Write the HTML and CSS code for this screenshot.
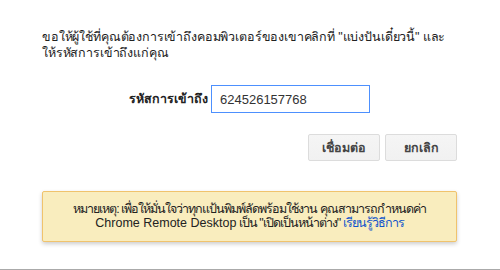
FILE: index.html
```html
<!DOCTYPE html>
<html lang="th">
<head>
<meta charset="utf-8">
<link rel="stylesheet" href="styles.css">
</head>
<body>
<div class="dialog">
  <p class="intro">ขอให้ผู้ใช้ที่คุณต้องการเข้าถึงคอมพิวเตอร์ของเขาคลิกที่ "แบ่งปันเดี๋ยวนี้" และ<br>ให้รหัสการเข้าถึงแก่คุณ</p>
  <div class="code-row">
    <label class="code-label" for="code">รหัสการเข้าถึง</label>
    <input class="code-input" id="code" type="text" value="624526157768">
  </div>
  <div class="actions">
    <button class="btn">เชื่อมต่อ</button>
    <button class="btn">ยกเลิก</button>
  </div>
  <div class="notice">หมายเหตุ: เพื่อให้มั่นใจว่าทุกแป้นพิมพ์ลัดพร้อมใช้งาน คุณสามารถกำหนดค่า<br><span class="latin">Chrome Remote Desktop</span> เป็น "เปิดเป็นหน้าต่าง" <a class="link" href="#">เรียนรู้วิธีการ</a></div>
</div>
<div class="bottom-edge"></div>
</body>
</html>
```
FILE: styles.css
```css
html, body {
  margin: 0;
  padding: 0;
  background: #fff;
}
body {
  width: 500px;
  height: 270px;
  overflow: hidden;
  position: relative;
  font-family: "Liberation Sans", Arial, "Noto Sans", sans-serif;
  font-size: 13px;
  color: #222;
}
.dialog {
  padding: 29px 43px 0 42px;
}
.intro {
  margin: 0;
  line-height: 16px;
  white-space: nowrap;
  font-size: 12.5px;
  letter-spacing: -0.15px;
}
.code-row {
  display: flex;
  align-items: center;
  justify-content: center;
  gap: 3px;
  margin-top: 24px;
}
.code-label {
  font-weight: bold;
  color: #222;
  font-size: 12.5px;
}
.code-input {
  box-sizing: border-box;
  width: 159px;
  height: 28px;
  border: 1px solid #4d90fe;
  padding: 0 8px;
  font-family: "Liberation Sans", Arial, sans-serif;
  font-size: 13px;
  color: #333;
  outline: none;
  margin: 0;
}
.actions {
  display: flex;
  justify-content: flex-end;
  gap: 5px;
  margin-top: 21px;
}
.btn {
  box-sizing: border-box;
  width: 72px;
  height: 27px;
  border: 1px solid #dcdcdc;
  border-radius: 2px;
  background: linear-gradient(#f5f5f5, #f1f1f1);
  font-family: "Liberation Sans", Arial, sans-serif;
  font-size: 12.5px;
  font-weight: bold;
  color: #444;
  padding: 0;
  margin: 0;
}
.notice {
  box-sizing: border-box;
  margin-top: 30px;
  height: 51px;
  background: #f9edbe;
  border: 1px solid #f0c36d;
  border-radius: 2px;
  box-shadow: 0 2px 4px rgba(0, 0, 0, 0.2);
  text-align: center;
  line-height: 14px;
  padding-top: 10px;
  color: #222;
  white-space: nowrap;
  font-size: 12.5px;
  letter-spacing: -1px;
}
.latin {
  letter-spacing: 0;
}
.link {
  color: #1155cc;
  text-decoration: none;
}
.bottom-edge {
  position: absolute;
  left: 0;
  right: 0;
  bottom: 0;
  height: 1px;
  background: #aaa;
}
```
